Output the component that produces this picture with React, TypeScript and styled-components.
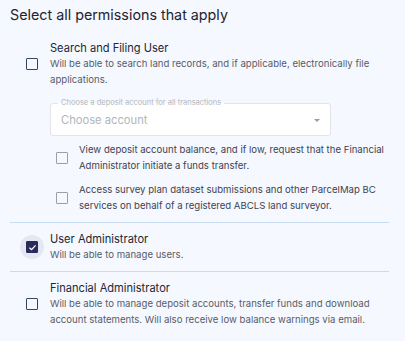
import React from "react";
import styled, { createGlobalStyle } from "styled-components";

const GlobalStyle = createGlobalStyle`
  html, body {
    margin: 0;
    padding: 0;
    background: #f5f8fe;
  }
  body {
    font-family: Inter, "Noto Sans", sans-serif;
  }
`;

export default function App() {
  return (
    <>
      <GlobalStyle />
      <Page>
        <Title>Select all permissions that apply</Title>

        <Group>
          <Row>
            <Halo>
              <Box checked={false} />
            </Halo>
            <Texts>
              <Label>Search and Filing User</Label>
              <Desc>
                Will be able to search land records, and if applicable,
                electronically file applications.
              </Desc>
            </Texts>
          </Row>
          <SubArea>
            <SelectBox>
              <Legend>Choose a deposit account for all transactions</Legend>
              <Placeholder>Choose account</Placeholder>
              <Caret />
            </SelectBox>
            <SubRow>
              <SubBox />
              <SubText>
                View deposit account balance, and if low, request that the
                Financial Administrator initiate a funds transfer.
              </SubText>
            </SubRow>
            <SubRow>
              <SubBox />
              <SubText>
                Access survey plan dataset submissions and other ParcelMap BC
                services on behalf of a registered ABCLS land surveyor.
              </SubText>
            </SubRow>
          </SubArea>
        </Group>

        <Group>
          <Row>
            <Halo active>
              <Box checked={true}>
                <svg width="9" height="9" viewBox="0 0 10 10">
                  <path
                    d="M1.6 5.2 L4 7.4 L8.4 2.6"
                    fill="none"
                    stroke="#fff"
                    strokeWidth="1.5"
                  />
                </svg>
              </Box>
            </Halo>
            <Texts>
              <Label>User Administrator</Label>
              <Desc>Will be able to manage users.</Desc>
            </Texts>
          </Row>
        </Group>

        <Group last>
          <Row>
            <Halo>
              <Box checked={false} />
            </Halo>
            <Texts>
              <Label>Financial Administrator</Label>
              <Desc>
                Will be able to manage deposit accounts, transfer funds and
                download account statements. Will also receive low balance
                warnings via email.
              </Desc>
            </Texts>
          </Row>
        </Group>
      </Page>
    </>
  );
}

const Page = styled.div`
  padding: 5px 16px 0 10px;
  width: 379px;
`;

const Title = styled.h2`
  margin: 0 0 7px 0;
  font-size: 14.3px;
  font-weight: 400;
  color: #1e2330;
  line-height: 20px;
`;

const Group = styled.div<{ last?: boolean }>`
  padding: 8px 0;
  border-bottom: ${({ last }) => (last ? "none" : "1px solid #c9dcef")};
`;

const Row = styled.div`
  display: flex;
  align-items: center;
`;

const Halo = styled.div<{ active?: boolean }>`
  flex: none;
  width: 24px;
  height: 24px;
  margin: 0 6px 0 10px;
  border-radius: 50%;
  background: ${({ active }) => (active ? "#e6e7f4" : "transparent")};
  display: flex;
  align-items: center;
  justify-content: center;
`;

const Box = styled.div<{ checked: boolean }>`
  width: 12px;
  height: 12px;
  box-sizing: border-box;
  border: 1.5px solid ${({ checked }) => (checked ? "#2a2a5c" : "#34445e")};
  border-radius: 1px;
  background: ${({ checked }) => (checked ? "#2a2a5c" : "transparent")};
  display: flex;
  align-items: center;
  justify-content: center;
`;

const Texts = styled.div`
  display: flex;
  flex-direction: column;
`;

const Label = styled.div`
  font-size: 11.1px;
  line-height: 16px;
  color: #222733;
`;

const Desc = styled.div`
  font-size: 9.6px;
  line-height: 16px;
  color: #575c68;
`;

const SubArea = styled.div`
  padding: 15px 0 0 40px;
  display: flex;
  flex-direction: column;
  gap: 8px;
`;

const SelectBox = styled.div`
  position: relative;
  width: 281px;
  height: 33px;
  box-sizing: border-box;
  border: 1px solid #e2e4e8;
  border-radius: 3px;
  background: #fff;
  display: flex;
  align-items: center;
  padding-left: 10px;
  margin-bottom: -2px;
`;

const Legend = styled.span`
  position: absolute;
  top: -6px;
  left: 7px;
  padding: 0 3px;
  font-size: 7.5px;
  line-height: 10px;
  color: #b4b7bd;
  background: linear-gradient(#f5f8fe 50%, #fff 50%);
`;

const Placeholder = styled.span`
  font-size: 11.2px;
  color: #b2b5bb;
`;

const Caret = styled.span`
  position: absolute;
  right: 10px;
  top: 15px;
  width: 0;
  height: 0;
  border-left: 3.5px solid transparent;
  border-right: 3.5px solid transparent;
  border-top: 3.5px solid #9a9da3;
`;

const SubRow = styled.div`
  display: flex;
  align-items: center;
`;

const SubBox = styled.div`
  flex: none;
  width: 12px;
  height: 12px;
  box-sizing: border-box;
  border: 1.5px solid #9b9ea4;
  border-radius: 1px;
  margin: 0 11px 0 6px;
`;

const SubText = styled.div`
  font-size: 9.6px;
  line-height: 16px;
  color: #3e4351;
`;
